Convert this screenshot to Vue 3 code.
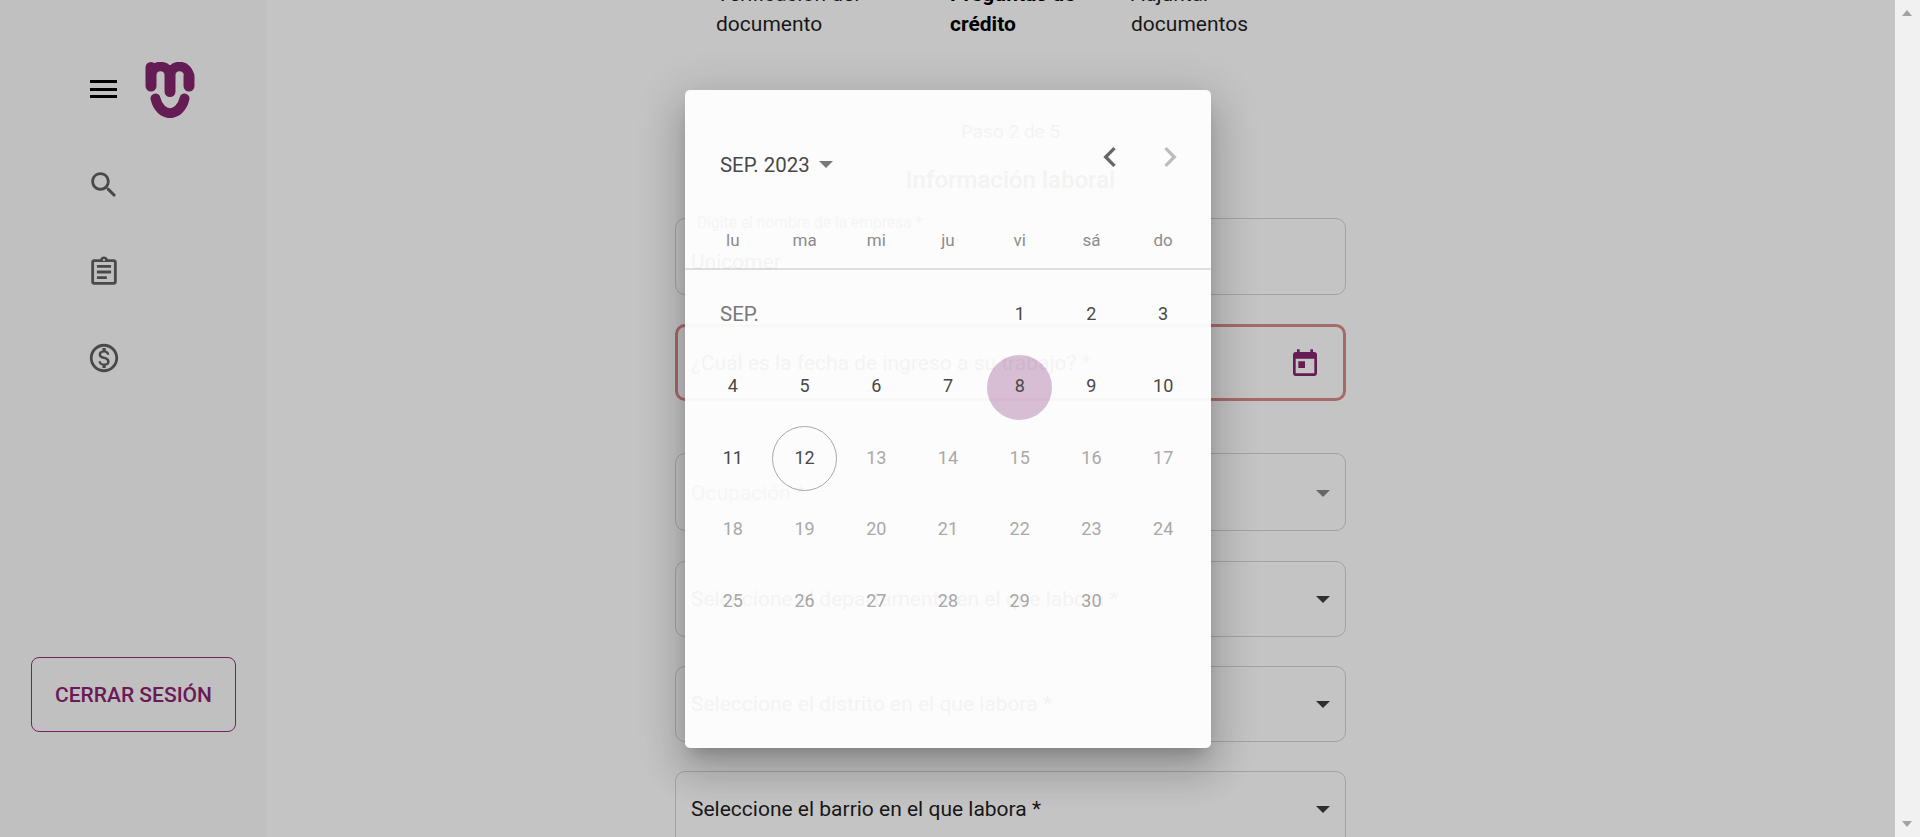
<template>
  <div class="screen">
    <div class="page">
      <aside class="sidebar">
        <div class="brand">
          <button class="menu-btn" type="button" aria-label="Menú"><span></span><span></span><span></span></button>
          <svg class="logo" viewBox="0 0 50 56" fill="none" stroke="#84246c" stroke-linecap="round" stroke-width="11">
            <path d="M6 5.5V24M44 14V24M25 9V29.5" />
            <path d="M6 14A9.5 9.5 0 0 1 25 14A9.5 9.5 0 0 1 44 14" stroke-width="9.5" />
            <path d="M10.5 36.5C15 56 35 56 39.5 36.5" stroke-width="10" />
          </svg>
        </div>
        <nav class="nav">
          <svg class="nav-icon" viewBox="0 0 24 24"><path d="M15.5 14h-.79l-.28-.27C15.41 12.59 16 11.11 16 9.5 16 5.91 13.09 3 9.5 3S3 5.91 3 9.5 5.91 16 9.5 16c1.61 0 3.09-.59 4.23-1.57l.27.28v.79l5 4.99L20.49 19l-4.99-5zm-6 0C7.01 14 5 11.99 5 9.5S7.01 5 9.5 5 14 7.01 14 9.5 11.99 14 9.5 14z" /></svg>
          <svg class="nav-icon" viewBox="0 0 24 24"><path d="M7 15h7v2H7zm0-4h10v2H7zm0-4h10v2H7zm12-4h-4.18C14.4 1.84 13.3 1 12 1c-1.3 0-2.4.84-2.82 2H5c-.14 0-.27.01-.4.04-.39.08-.74.28-1.01.55-.18.18-.33.4-.43.64-.1.23-.16.49-.16.77v14c0 .27.06.54.16.78s.25.45.43.64c.27.27.62.47 1.01.55.13.02.26.03.4.03h14c1.1 0 2-.9 2-2V5c0-1.1-.9-2-2-2zm-7-.25c.41 0 .75.34.75.75s-.34.75-.75.75-.75-.34-.75-.75.34-.75.75-.75zM19 19H5V5h14v14z" /></svg>
          <svg class="nav-icon" viewBox="0 0 24 24"><path d="M12 2C6.48 2 2 6.48 2 12s4.48 10 10 10 10-4.48 10-10S17.52 2 12 2zm0 18c-4.41 0-8-3.59-8-8s3.59-8 8-8 8 3.59 8 8-3.59 8-8 8zm.31-8.86c-1.77-.45-2.34-.94-2.34-1.67 0-.84.79-1.43 2.1-1.43 1.38 0 1.9.66 1.94 1.64h1.71c-.05-1.34-.87-2.57-2.49-2.97V5H10.9v1.69c-1.51.32-2.72 1.3-2.72 2.81 0 1.79 1.49 2.69 3.66 3.21 1.95.46 2.34 1.15 2.34 1.87 0 .53-.39 1.39-2.1 1.39-1.6 0-2.23-.72-2.32-1.64H8.04c.1 1.7 1.36 2.66 2.86 2.97V19h2.34v-1.67c1.52-.29 2.72-1.16 2.73-2.77-.01-2.2-1.9-2.96-3.66-3.42z" /></svg>
        </nav>
        <button class="logout" type="button">CERRAR SESIÓN</button>
      </aside>

      <main class="content">
        <div class="steps">
          <span class="step step--first">Verificación del documento</span>
          <span class="step step--active">Preguntas de crédito</span>
          <span class="step step--last">Adjuntar documentos</span>
        </div>
        <p class="paso">Paso 2 de 5</p>
        <h1 class="title">Información laboral</h1>

        <div class="field field--filled">
          <label class="field__float">Digite el nombre de la empresa *</label>
          <span class="field__text">Unicomer</span>
        </div>
        <div class="field field--focus">
          <span class="field__text">¿Cuál es la fecha de ingreso a su trabajo? <em>*</em></span>
          <svg class="field__calendar" viewBox="0 0 24 24"><path d="M19 3h-1V1h-2v2H8V1H6v2H5c-1.11 0-1.99.9-1.99 2L3 19c0 1.1.89 2 2 2h14c1.1 0 2-.9 2-2V5c0-1.1-.9-2-2-2zm0 16H5V8h14v11zM7 10h5v5H7z" /></svg>
        </div>
        <div class="field field--muted field--ocupacion">
          <span class="field__text">Ocupación *</span>
          <i class="caret"></i>
        </div>
        <div v-for="label in selects" :key="label" class="field field--select">
          <span class="field__text">{{ label }}</span>
          <i class="caret"></i>
        </div>
      </main>

      <div class="backdrop">
        <section class="picker">
          <header class="picker__head">
            <div class="picker__month">SEP. 2023 <i class="caret caret--small"></i></div>
            <div class="picker__arrows">
              <svg class="chevron" viewBox="0 0 24 24"><path d="M15.41 7.41 14 6l-6 6 6 6 1.41-1.41L10.83 12z" /></svg>
              <svg class="chevron chevron--off" viewBox="0 0 24 24"><path d="M10 6 8.59 7.41 13.17 12l-4.58 4.59L10 18l6-6z" /></svg>
            </div>
          </header>
          <div class="picker__week">
            <span v-for="day in weekdays" :key="day">{{ day }}</span>
          </div>
          <div class="picker__grid">
            <span class="picker__label">SEP.</span>
            <span
              v-for="day in days"
              :key="day"
              class="day"
              :class="{ 'day--off': day > 12, 'day--selected': day === 8, 'day--today': day === 12 }"
            >{{ day }}</span>
          </div>
        </section>
      </div>
    </div>

    <div class="scrollbar">
      <i class="scrollbar__up"></i>
      <i class="scrollbar__down"></i>
    </div>
  </div>
</template>

<script setup>
const weekdays = ["lu", "ma", "mi", "ju", "vi", "sá", "do"];
const days = Array.from({ length: 30 }, (_, i) => i + 1);
const selects = [
  "Seleccione el departamento en el que labora *",
  "Seleccione el distrito en el que labora *",
  "Seleccione el barrio en el que labora *",
];
</script>

<style>
html,
body {
  margin: 0;
  overflow: hidden;
}
</style>

<style scoped>
.screen {
  display: flex;
  height: 837px;
  overflow: hidden;
  font-family: Roboto, "Liberation Sans", sans-serif;
  color: #1f1f1f;
}

.page {
  position: relative;
  flex: 1;
  display: flex;
  overflow: hidden;
  background: #ffffff;
}

.sidebar {
  width: 267px;
  flex: none;
  display: flex;
  flex-direction: column;
  background: #fafafa;
  padding: 62px 0 105px 31px;
  box-sizing: border-box;
}

.brand {
  display: flex;
  align-items: center;
  gap: 28px;
  padding-left: 59px;
}

.menu-btn {
  display: flex;
  flex-direction: column;
  gap: 4.5px;
  width: 27px;
  margin-top: -2px;
  padding: 0;
  border: none;
  background: none;
}

.menu-btn span {
  height: 3px;
  background: #000;
}

.logo {
  width: 50px;
  height: 56px;
}

.nav {
  display: flex;
  flex-direction: column;
  gap: 52.5px;
  margin-top: 50px;
  padding-left: 56px;
}

.nav-icon {
  width: 34px;
  height: 34px;
  fill: #606060;
}

.logout {
  margin-top: auto;
  width: 205px;
  height: 75px;
  background: transparent;
  border: 1px solid #983080;
  border-radius: 8px;
  color: #8a2370;
  font: 500 21px Roboto, sans-serif;
}

.content {
  width: 671px;
  margin-left: 408px;
  flex: none;
}

.steps {
  display: flex;
  margin-top: -21px;
  padding-left: 41px;
  font-size: 21px;
  line-height: 30px;
}

.step--first {
  width: 234px;
  padding-right: 50px;
  box-sizing: border-box;
}

.step--active {
  width: 181px;
  padding-right: 15px;
  box-sizing: border-box;
  font-weight: 700;
  color: #000;
}

.step--last {
  width: 130px;
}

.paso {
  margin: 81px 0 0;
  text-align: center;
  font-size: 19px;
  line-height: 24px;
}

.title {
  margin: 21px 0 0;
  text-align: center;
  font-size: 24px;
  font-weight: 500;
  line-height: 30px;
}

.field {
  position: relative;
  display: flex;
  align-items: center;
  justify-content: space-between;
  height: 77px;
  margin-top: 29px;
  padding: 0 15px;
  box-sizing: border-box;
  border: 1px solid rgba(0, 0, 0, 0.17);
  border-radius: 10px;
  font-size: 21px;
}

.field--filled {
  margin-top: 23px;
  padding-top: 11px;
}

.field__float {
  position: absolute;
  left: 21px;
  top: -5px;
  font-size: 15.6px;
  line-height: 18px;
  color: #555;
}

.field--focus {
  border: 3px solid #da8a8a;
  padding: 0 13px;
}

.field--focus em {
  font-style: normal;
  color: #c33;
}

.field__calendar {
  width: 32px;
  height: 32px;
  fill: #84246c;
  margin: 2px 9px 0 0;
}

.field--ocupacion {
  margin-top: 52px;
  height: 78px;
  padding-top: 2px;
}

.field--ocupacion .field__text {
  color: #666;
}

.field--select {
  height: 76px;
}

.field--ocupacion + .field--select {
  margin-top: 30px;
}

.caret {
  display: block;
  width: 0;
  height: 0;
  border-left: 7px solid transparent;
  border-right: 7px solid transparent;
  border-top: 7px solid #3d3d3d;
}

.field--ocupacion .caret {
  border-top-color: #858585;
}

.backdrop {
  position: absolute;
  inset: 0;
  display: flex;
  align-items: center;
  justify-content: center;
  background: rgba(0, 0, 0, 0.23);
}

.picker {
  width: 526px;
  height: 658px;
  margin-left: 1px;
  opacity: 0.95;
  background: #fff;
  border-radius: 5px;
  box-shadow:
    0 11px 15px -7px rgba(0, 0, 0, 0.2),
    0 24px 38px 3px rgba(0, 0, 0, 0.14),
    0 9px 46px 8px rgba(0, 0, 0, 0.12);
  display: flex;
  flex-direction: column;
  color: #424242;
}

.picker__head {
  display: flex;
  align-items: center;
  justify-content: space-between;
  height: 60px;
  margin-top: 37px;
  padding: 0 21px 0 35px;
}

.picker__month {
  display: flex;
  align-items: center;
  gap: 9px;
  margin-top: 16px;
  font-size: 20.4px;
}

.caret--small {
  border-top-color: #757575;
}

.picker__arrows {
  display: flex;
  gap: 20px;
}

.chevron {
  width: 40px;
  height: 40px;
  fill: #616161;
}

.chevron--off {
  fill: #bdbdbd;
}

.picker__week {
  display: grid;
  grid-template-columns: repeat(7, 1fr);
  margin-top: 26px;
  padding: 0 12px;
  height: 55px;
  align-items: center;
  justify-items: center;
  border-bottom: 2px solid #e0e0e0;
  font-size: 17px;
  color: #8a8a8a;
}

.picker__grid {
  display: grid;
  grid-template-columns: repeat(7, 1fr);
  grid-auto-rows: 71.7px;
  margin-top: 10px;
  padding: 0 12px;
  align-items: center;
  justify-items: center;
  font-size: 18px;
}

.picker__label {
  grid-column: 1 / span 4;
  justify-self: start;
  padding: 0 0 2px 23px;
  font-size: 20.5px;
  color: #757575;
}

.day {
  display: flex;
  align-items: center;
  justify-content: center;
  width: 65px;
  height: 65px;
  padding-bottom: 3px;
  box-sizing: border-box;
  border-radius: 50%;
}

.day--off {
  color: #a8a8a8;
}

.day--selected {
  background: rgba(130, 40, 120, 0.3);
}

.day--today {
  border: 1px solid #a8a8a8;
}

.scrollbar {
  position: relative;
  width: 25px;
  flex: none;
  background: #f1f1f1;
}

.scrollbar__up,
.scrollbar__down {
  position: absolute;
  left: 7px;
  width: 0;
  height: 0;
  border-left: 5.5px solid transparent;
  border-right: 5.5px solid transparent;
}

.scrollbar__up {
  top: 10px;
  border-bottom: 6px solid #a3a3a3;
}

.scrollbar__down {
  bottom: 10px;
  border-top: 6px solid #a3a3a3;
}
</style>
